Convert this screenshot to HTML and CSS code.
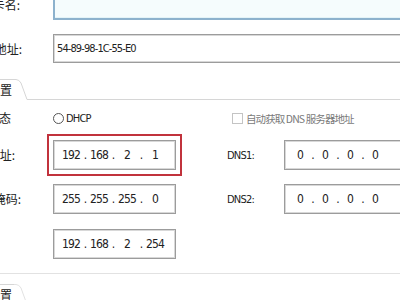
FILE: index.html
```html
<!DOCTYPE html>
<html lang="zh-CN">
<head>
    <meta charset="UTF-8">
    <title>IP 设置</title>
    <link rel="stylesheet" href="styles.css">
</head>
<body>

    <!-- Adapter info -->
    <div class="row row-name">
        <div class="label label-name"><span>网卡名:</span></div>
        <div class="field field-focus"></div>
    </div>
    <div class="row row-mac">
        <div class="label"><span>MAC 地址:</span></div>
        <div class="field field-text">54-89-98-1C-55-E0</div>
    </div>

    <!-- IP config tab -->
    <div class="tabbar">
        <div class="tab"><span>IP 配置</span></div>
        <svg class="tab-edge" width="14" height="21" viewBox="0 0 14 21">
            <path d="M0 0.5 H2 Q5 0.5 7 4 L13 20.5 H14" fill="none" stroke="#d6d6d6" stroke-width="1"/>
        </svg>
        <div class="tab-line"></div>
    </div>

    <div class="row row-mode">
        <div class="label label-short"><span>状态</span></div>
        <label class="radio"><span class="radio-dot"></span>DHCP</label>
        <label class="check"><span class="check-box"></span>自动获取 DNS 服务器地址</label>
    </div>

    <div class="row row-ip">
        <div class="label label-ip"><span>IP 地址:</span></div>
        <div class="field ip ip-marked">
            <span>192</span><i>.</i><span>168</span><i>.</i><span>2</span><i>.</i><span>1</span>
        </div>
        <div class="dns-label">DNS1:</div>
        <div class="field ip ip-wide">
            <span>0</span><i>.</i><span>0</span><i>.</i><span>0</span><i>.</i><span>0</span>
        </div>
    </div>

    <div class="row row-mask">
        <div class="label label-mask"><span>子网掩码:</span></div>
        <div class="field ip">
            <span>255</span><i>.</i><span>255</span><i>.</i><span>255</span><i>.</i><span>0</span>
        </div>
        <div class="dns-label">DNS2:</div>
        <div class="field ip ip-wide">
            <span>0</span><i>.</i><span>0</span><i>.</i><span>0</span><i>.</i><span>0</span>
        </div>
    </div>

    <div class="row row-gw">
        <div class="label"><span></span></div>
        <div class="field ip">
            <span>192</span><i>.</i><span>168</span><i>.</i><span>2</span><i>.</i><span>254</span>
        </div>
    </div>

    <div class="group-end"></div>

    <!-- next tab -->
    <div class="tabbar tabbar-next">
        <div class="tab"><span>WiFi 配置</span></div>
        <svg class="tab-edge" width="14" height="21" viewBox="0 0 14 21">
            <path d="M0 0.5 H2 Q5 0.5 7 4 L13 20.5 H14" fill="none" stroke="#e2e2e2" stroke-width="1"/>
        </svg>
        <div class="tab-line tab-line-soft"></div>
    </div>

</body>
</html>
```

FILE: styles.css
```css
body { margin: 0; width: 400px; height: 300px; overflow: hidden; background: #fff; color: #222;
    font-family: "Liberation Sans Narrow", "DejaVu Sans Condensed", "Noto Sans CJK SC", sans-serif; font-size: 11px; }

.row { display: flex; align-items: center; }
.label { width: 53px; flex: none; }
.label span, .tab span { display: flex; justify-content: flex-end; width: 22px; overflow: hidden; white-space: nowrap;
    font-family: "Noto Sans CJK SC", sans-serif; font-size: 12px; line-height: 14px; color: #222; }
.label-name span { width: 20px; }
.label-short span { width: 11px; }
.label-ip span { width: 15px; }
.label-mask span { width: 21px; }

.field { box-sizing: border-box; height: 30px; border: 1px solid #9c9c9c; box-shadow: inset 0 0 0 1px #d8d8d8;
    display: flex; align-items: center; background: #fff; }
.field-focus { flex: 1; margin-right: -10px; border: 2px solid #8db2cd; border-top: none; box-shadow: inset 0 -1px 0 #e4f4f8; background: #f5fcfd; }
.field-text { flex: 1; margin-right: -10px; height: 29px; padding-left: 3px; font-size: 11px; letter-spacing: -0.9px; }

.row-name { margin-top: -10px; height: 30px; }
.row-name .field { height: 30px; }
.row-mac { margin-top: 14px; }

/* tabs */
.tabbar { display: flex; margin-top: 16px; height: 21px; }
.tab { width: 14px; box-sizing: border-box; border-top: 1px solid #d6d6d6; padding-top: 3px; }
.tab span { width: 12px; }
.tab-edge { flex: none; }
.tab-line { flex: 1; border-bottom: 1px solid #d6d6d6; }
.tabbar-next { margin-top: 10px; }
.tab-line-soft { border-color: #e6e6e6; }

/* radio + checkbox */
.row-mode { margin-top: 8px; height: 20px; }
.radio { display: flex; align-items: center; width: 179px; font-size: 11px; letter-spacing: -0.8px; }
.radio-dot { width: 9px; height: 9px; border: 1px solid #555; border-radius: 50%; margin-right: 2px; }
.check { display: flex; align-items: center; color: #7a7a7a; font-family: "Noto Sans CJK SC", sans-serif; font-size: 10.5px; letter-spacing: -0.9px; }
.check-box { width: 9px; height: 9px; border: 1px solid #c4c4c4; margin-right: 3px; }

/* ip inputs */
.ip { width: 123px; padding-left: 8px; font-size: 12px; letter-spacing: -0.9px; }
.ip span { width: 18px; text-align: center; }
.ip i { width: 10px; text-align: center; font-style: normal; }
.ip-wide { flex: 1; margin-right: -20px; padding-left: 8px; }
.ip-wide span { width: 14px; }
.ip-wide i { width: 11px; }
.ip-marked { outline: 2px solid #c1323c; outline-offset: 4px; }
.dns-label { width: 57px; margin-left: 51px; font-size: 11px; letter-spacing: -0.8px; }

.row-ip { margin-top: 12px; }
.row-mask { margin-top: 14px; }
.row-gw { margin-top: 15px; }

.group-end { margin-top: 14px; border-top: 1px solid #e2e2e2; }
```
